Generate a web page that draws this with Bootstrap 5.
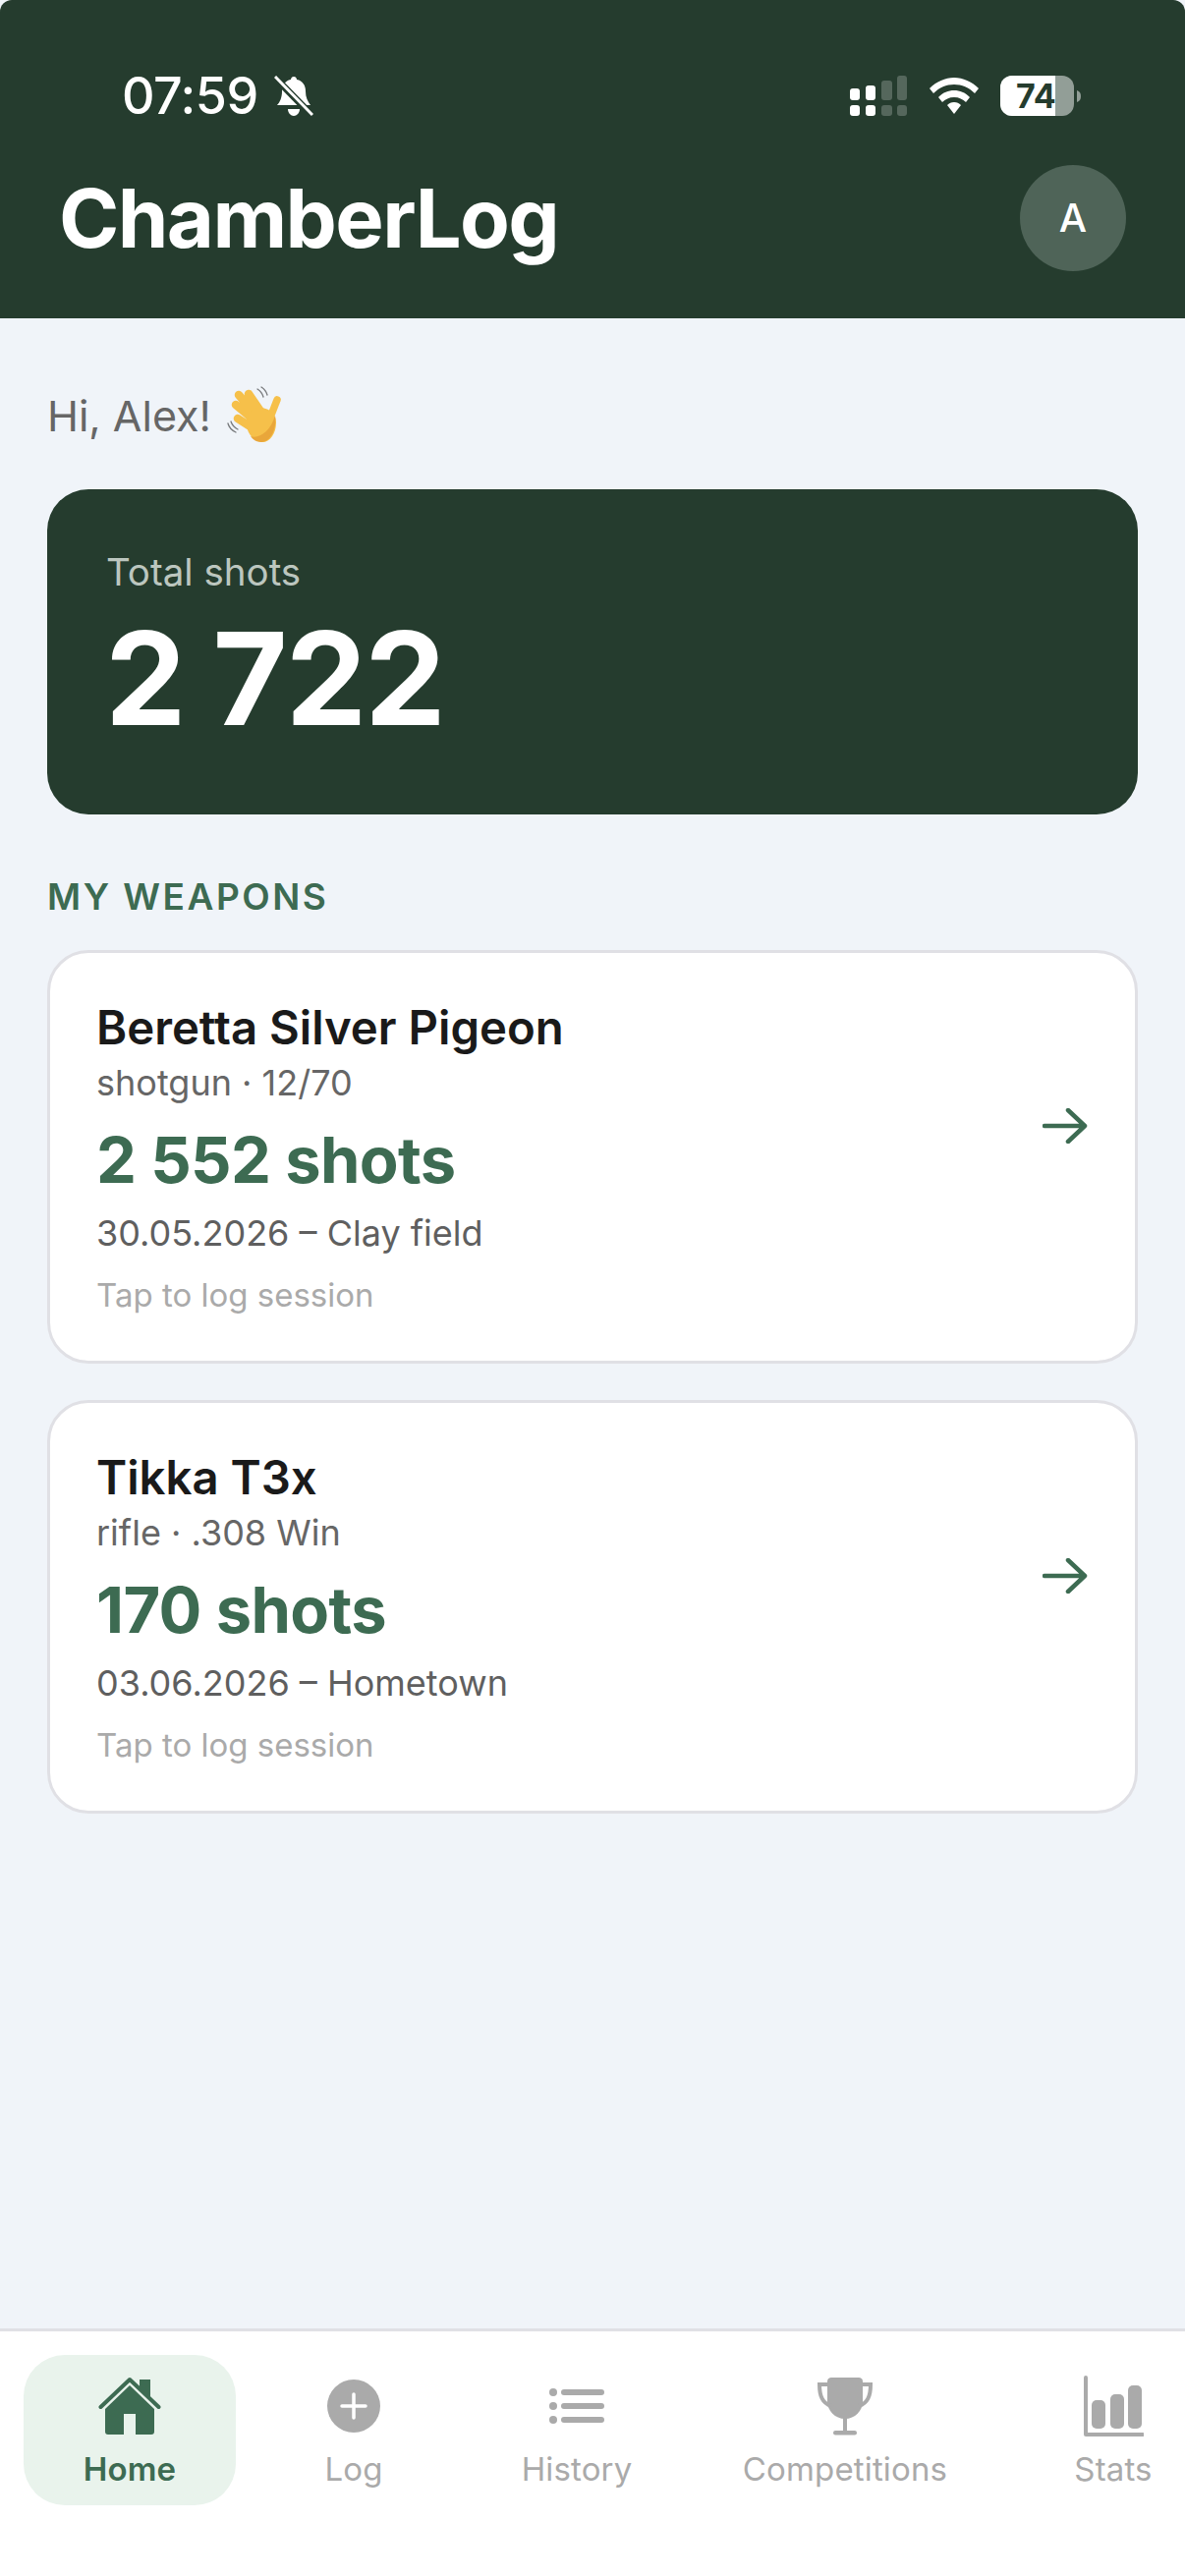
<!DOCTYPE html>
<html lang="en">
<head>
  <meta charset="UTF-8">
  <meta name="viewport" content="width=device-width, initial-scale=1.0">
  <title>ChamberLog</title>
  <link href="https://cdn.jsdelivr.net/npm/bootstrap@5.3.0/dist/css/bootstrap.min.css" rel="stylesheet">
  <style>
    html, body { height: 100%; }
    body { font-family: Inter, "Liberation Sans", sans-serif; background: #f0f4f9; margin: 0; }
    .app-screen { height: 2622px; width: 1206px; }
    .app-top { background: #253c2e; color: #fff; height: 324px; padding: 77px 60px 0 60px; border-radius: 12px 12px 0 0; }
    .status-row { height: 42px; padding-left: 64px; }
    .status-time { font-size: 52px; font-weight: 500; line-height: 42px; letter-spacing: -.5px; }
    .status-right { gap: 22px; padding-right: 46px; }
    .app-title { font-size: 83px; font-weight: 700; line-height: 100px; letter-spacing: -1.6px; margin: 0; }
    .title-row { margin-top: 49px; }
    .avatar-dot { width: 108px; height: 108px; background: #4f6458; font-size: 40px; font-weight: 500; }
    .app-main { padding: 0 48px; }
    .hello-line { font-size: 43px; color: #666; line-height: 60px; height: 60px; margin: 69px 0 45px 0; gap: 15px; }
    .total-box { background: #253c2e; border-radius: 42px; height: 331px; padding: 61px 59px; color: #fff; }
    .total-label { font-size: 38.5px; line-height: 46px; color: #bcc6bf; padding-left: 1px; }
    .total-num { font-size: 131px; font-weight: 700; line-height: 130px; letter-spacing: -2px; margin-top: 21px; }
    .section-head { font-size: 37px; font-weight: 600; letter-spacing: 2.5px; color: #3d6b52; line-height: 44px; margin: 62px 0 32px 0; }
    .gun-box { background: #fff; border: 3px solid #e0e0e5; border-radius: 42px; height: 421px; padding: 48px 48px 0 47px; margin-bottom: 37px; }
    .gun-name { font-size: 47.3px; font-weight: 600; color: #1a1a1a; line-height: 56px; }
    .gun-sub { font-size: 36px; color: #666; line-height: 44px; margin-top: 6px; }
    .gun-count { font-size: 65px; font-weight: 700; color: #3d6b52; line-height: 80px; margin-top: 17px; letter-spacing: -.6px; }
    .gun-last { font-size: 36px; color: #5f5f5f; line-height: 46px; margin-top: 11px; }
    .gun-tap { font-size: 33px; color: #aaa; line-height: 42px; margin-top: 19px; }
    .gun-arrow { margin-top: 110px; }
    .tab-bar { background: #fff; border-top: 3px solid #e0e0e5; height: 252px; display: grid; grid-template-columns: 216px 240px 214px 332px 214px; padding: 24px 0 0 24px; width: 1206px; }
    .tab-item { height: 153px; color: #aaa; font-size: 33px; line-height: 40px; padding-top: 21px; letter-spacing: .15px; }
    .tab-item svg { display: block; height: 62px; margin-bottom: 13px; }
    .tab-on { background: #e9f3ec; color: #3d6b52; font-weight: 600; border-radius: 42px; }
  </style>
</head>
<body>
  <div class="app-screen d-flex flex-column overflow-hidden">
    <header class="app-top flex-shrink-0">
      <div class="status-row d-flex justify-content-between">
        <div class="d-flex gap-3">
          <span class="status-time">07:59</span>
          <svg width="40" height="42" viewBox="0 0 40 42" fill="#fff"><path d="M20 1c2 0 3 1.500 3 3 6 1 9 6 9 12 0 6 2 10 5 14H3c3-3 5-8 5-14 0-6 3-11 9-12 0-1.500 1-3 3-3zM14 34h12c0 4-3 7-6 7s-6-3-6-7z"/><path d="M1 2l37 38" stroke="#253c2e" stroke-width="7"/><path d="M1 1l38 39" stroke="#fff" stroke-width="3"/></svg>
        </div>
        <div class="status-right d-flex align-items-start">
          <svg width="60" height="42" viewBox="0 0 60 42"><g fill="#fff"><rect x="1" y="13" width="10" height="12" rx="3"/><rect x="1" y="30" width="10" height="11" rx="3"/><rect x="17" y="10" width="10" height="15" rx="3"/><rect x="17" y="30" width="10" height="11" rx="3"/></g><g fill="#fff" opacity=".22"><rect x="33" y="5" width="11" height="20" rx="3"/><rect x="33" y="30" width="11" height="11" rx="3"/><rect x="49" width="10" height="25" rx="3"/><rect x="49" y="30" width="10" height="11" rx="3"/></g></svg>
          <svg width="50" height="42" viewBox="0 0 50 42" fill="#fff"><path d="M25 2c9 0 18 4 25 11l-4 5C40 12 33 9 25 9S10 12 4 18l-4-5C7 6 16 2 25 2z"/><path d="M25 15c6 0 11 2 16 7l-4 5c-3-3-7-5-12-5s-9 2-12 5l-4-5c5-5 10-7 16-7z"/><path d="M25 27c3 0 5 1 7 3l-7 9-7-9c2-2 4-3 7-3z"/></svg>
          <svg width="82" height="42" viewBox="0 0 82 42"><rect width="75" height="41" rx="12" fill="#fff" opacity=".5"/><path d="M12 0h44v41H12A12 12 0 0 1 0 29V12A12 12 0 0 1 12 0z" fill="#fff"/><path d="M78 15c3 1 4 3 4 6s-1 5-4 6z" fill="#fff" opacity=".5"/><text x="16" y="33" font-family="Inter" font-size="34" font-weight="700" fill="#253c2e">74</text></svg>
        </div>
      </div>
      <div class="title-row d-flex justify-content-between align-items-center">
        <h1 class="app-title">ChamberLog</h1>
        <div class="avatar-dot rounded-circle d-flex align-items-center justify-content-center">A</div>
      </div>
    </header>

    <main class="app-main flex-grow-1">
      <div class="hello-line d-flex align-items-center">Hi, Alex!
        <svg width="58" height="60" viewBox="10 10 58 60">
          <g fill="none" stroke="#77797c" stroke-width="1.300" stroke-linecap="round"><path d="M42 13c3 2 5 4 6 8M46 11c3 2 5 4 6 8M12 48c1 4 4 7 8 9M15 46c1 3 3 6 7 8"/></g>
          <g fill="none" stroke="#f6c04a" stroke-linecap="round">
            <path d="M33 18l13 19M23 19l18 21M20 29l18 15M22 43l14 9" stroke-width="8.500"/>
            <path d="M62 24l-7 18" stroke-width="7.500"/>
          </g>
          <path d="M45 32c7 0 16 5 16 15 0 12-7 21-15 20-7-1-11-6-13-10-3-5-3-25 12-25z" fill="#f6c04a"/>
          <path d="M60 40c2 12-4 27-14 27-5 0-9-3-11-6 8 3 20-4 25-21z" fill="#e9a63a"/>
        </svg>
      </div>
      <div class="total-box">
        <div class="total-label">Total shots</div>
        <div class="total-num">2 722</div>
      </div>
      <div class="section-head">MY WEAPONS</div>
      <div class="gun-box d-flex align-items-start justify-content-between">
        <div>
          <div class="gun-name">Beretta Silver Pigeon</div>
          <div class="gun-sub">shotgun · 12/70</div>
          <div class="gun-count">2 552 shots</div>
          <div class="gun-last">30.05.2026 – Clay field</div>
          <div class="gun-tap">Tap to log session</div>
        </div>
        <svg class="gun-arrow" width="46" height="36" viewBox="0 0 46 36" fill="none" stroke="#3d6b52" stroke-width="4.500" stroke-linecap="round" stroke-linejoin="round"><path d="M2 18h41M26 2l17 16-17 16"/></svg>
      </div>
      <div class="gun-box d-flex align-items-start justify-content-between">
        <div>
          <div class="gun-name">Tikka T3x</div>
          <div class="gun-sub">rifle · .308 Win</div>
          <div class="gun-count">170 shots</div>
          <div class="gun-last">03.06.2026 – Hometown</div>
          <div class="gun-tap">Tap to log session</div>
        </div>
        <svg class="gun-arrow" width="46" height="36" viewBox="0 0 46 36" fill="none" stroke="#3d6b52" stroke-width="4.500" stroke-linecap="round" stroke-linejoin="round"><path d="M2 18h41M26 2l17 16-17 16"/></svg>
      </div>
    </main>

    <nav class="tab-bar flex-shrink-0">
      <div class="tab-item tab-on text-center">
        <svg class="mx-auto" width="64" height="62" viewBox="0 0 64 62" fill="#3d6b52"><path d="M2.500 32L32 4l29.500 28" fill="none" stroke="#3d6b52" stroke-width="4" stroke-linecap="round" stroke-linejoin="round"/><path d="M42 4h11v19l-11-10z"/><path d="M32 10l25 24v23c0 2-1 3-3 3H38V39H26v21H10c-2 0-3-1-3-3V34z"/></svg>
        Home
      </div>
      <div class="tab-item text-center">
        <svg class="mx-auto" width="54" height="62" viewBox="0 0 54 62"><circle cx="27" cy="31" r="27" fill="#aaa"/><path d="M27 19v24M15 31h24" stroke="#fff" stroke-width="3.500" stroke-linecap="round"/></svg>
        Log
      </div>
      <div class="tab-item text-center">
        <svg class="mx-auto" width="56" height="62" viewBox="0 0 56 62" fill="#aaa"><circle cx="4" cy="17" r="4"/><circle cx="4" cy="31" r="4"/><circle cx="4" cy="45" r="4"/><rect x="12" y="14" width="44" height="6" rx="3"/><rect x="12" y="28" width="44" height="6" rx="3"/><rect x="12" y="42" width="44" height="6" rx="3"/></svg>
        History
      </div>
      <div class="tab-item text-center">
        <svg class="mx-auto" width="58" height="62" viewBox="0 0 58 62" fill="#aaa"><path d="M11 6c0-3 2-4 4-4h28c2 0 4 1 4 4v20c0 10-8 18-18 18s-18-8-18-18z"/><path d="M13 9H3c0 12 3 19 12 22M45 9h10c0 12-3 19-12 22" fill="none" stroke="#aaa" stroke-width="4"/><rect x="27" y="42" width="4" height="16"/><rect x="17" y="56" width="24" height="4.500" rx="2.200"/></svg>
        Competitions
      </div>
      <div class="tab-item text-center">
        <svg class="mx-auto" width="62" height="62" viewBox="0 0 62 62" fill="#aaa"><path d="M3 2v58h58" fill="none" stroke="#aaa" stroke-width="4" stroke-linecap="round" stroke-linejoin="round"/><rect x="9" y="25" width="14" height="29" rx="5"/><rect x="28" y="19" width="14" height="35" rx="5"/><rect x="46" y="10" width="14" height="44" rx="5"/></svg>
        Stats
      </div>
    </nav>
  </div>
  <script src="https://cdn.jsdelivr.net/npm/bootstrap@5.3.0/dist/js/bootstrap.bundle.min.js"></script>
</body>
</html>
